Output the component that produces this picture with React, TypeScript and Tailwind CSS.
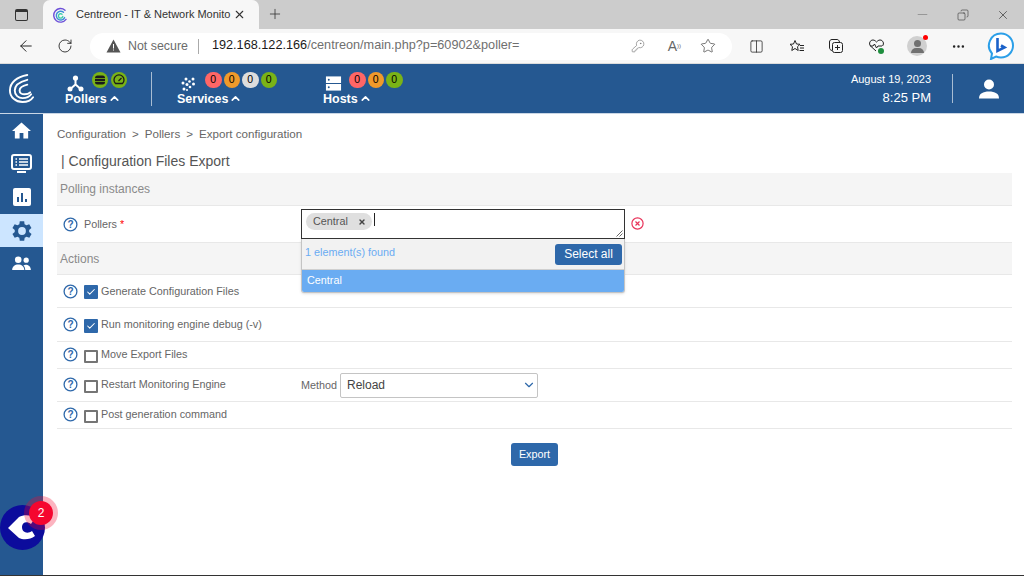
import { ArrowLeft, RotateCw, X, Plus, KeyRound, Star, Columns2, Copy, Minus, Ellipsis, ChevronUp, ChevronDown, Check } from 'lucide-react';

const font = 'font-["Liberation_Sans",Arial,sans-serif]';

function Help() {
  return (
    <svg width="15" height="15" viewBox="0 0 15 15" className="shrink-0">
      <circle cx="7.5" cy="7.5" r="6.4" fill="none" stroke="#2e68aa" strokeWidth="1.3" />
      <text x="7.5" y="11" textAnchor="middle" fontSize="10" fontWeight="700" fill="#2e68aa" fontFamily="Liberation Sans">?</text>
    </svg>
  );
}

function Box({ checked }: { checked?: boolean }) {
  return checked ? (
    <span className="flex h-[14px] w-[14px] shrink-0 items-center justify-center rounded-[1px] bg-[#2e68aa]">
      <Check size={10} strokeWidth={2.5} className="text-white" />
    </span>
  ) : (
    <span className="block h-[13px] w-[14px] shrink-0 rounded-[1px] border-2 border-[#757575]" />
  );
}

function Badge({ color, text }: { color: string; text: string }) {
  return (
    <span className={`flex h-[16.5px] w-[16.5px] items-center justify-center rounded-full text-[10.5px] text-black ${color}`}>{text}</span>
  );
}

function Section({ title, h }: { title: string; h: string }) {
  return (
    <div className={`flex items-center border-b border-[#e8e8e8] bg-[#f5f5f5] pl-[3px] text-[12px] text-[#8a8a8a] ${h}`}>{title}</div>
  );
}

function Row({ label, checked, h, children }: { label: string; checked?: boolean; h: string; children?: React.ReactNode }) {
  return (
    <div className={`flex items-center border-b border-[#e8e8e8] pl-[6px] ${h}`}>
      <span className={checked ? 'block' : 'block -translate-y-px'}><Help /></span>
      <span className="ml-[6px] mt-[2px] block"><Box checked={checked} /></span>
      <span className={`ml-[3px] w-[200px] text-[10.8px] text-[#666] ${checked ? '' : '-translate-y-px'}`}>{label}</span>
      {children}
    </div>
  );
}

function BrowserBar() {
  return (
    <div className="shrink-0">
      <div className="flex h-[29px] items-end bg-[#cccccc]">
        <div className="flex h-[29px] w-[43px] items-center justify-center">
          <div className="h-[12px] w-[13px] rounded-[2px] border-[1.5px] border-t-[3px] border-[#333]" />
        </div>
        <div className="flex h-[29px] w-[216px] items-center rounded-t-[7px] bg-[#f7f7f7] pl-[9px] pr-[13px]">
          <svg width="16" height="16" viewBox="0 0 16 16" fill="none" strokeWidth="1.4" strokeLinecap="round">
            <path d="M13 3.2A6.8 6.8 0 1 0 14 12.4" stroke="#6c4fd8" />
            <path d="M11.5 5.2A4.4 4.4 0 1 0 12.6 10.6" stroke="#3f8fd8" />
            <path d="M10 7.2A2.2 2.2 0 1 0 10.8 9.4" stroke="#3fcfa8" />
          </svg>
          <span className="ml-[8px] whitespace-nowrap text-[11px] text-[#333]">Centreon - IT &amp; Network Monito</span>
          <X size={13} className="ml-auto text-[#333]" />
        </div>
        <Plus size={16} strokeWidth={1.2} className="mb-[7px] ml-[8px] text-[#333]" />
        <div className="ml-auto flex h-[29px] items-center gap-[27px] pr-[14px] text-[#333]">
          <Minus size={15} strokeWidth={1} className="text-[#777]" />
          <Copy size={12} strokeWidth={1.2} className="scale-x-[-1]" />
          <X size={14} strokeWidth={1.2} />
        </div>
      </div>
      <div className="flex h-[35px] items-center border-b border-[#dcdcdc] bg-[#f7f7f7] pl-[17px]">
        <ArrowLeft size={18} strokeWidth={1.3} className="text-[#222]" />
        <RotateCw size={16} strokeWidth={1.3} className="ml-[22px] text-[#222]" />
        <div className="ml-[17px] flex h-[27px] w-[642px] items-center rounded-full bg-white pl-[16px]">
          <svg width="15" height="14" viewBox="0 0 15 14"><path d="M7.5 0.5 14.5 13.5H0.5Z" fill="#555" /><path d="M7 5h1v4.5H7zM7 10.5h1v1H7z" fill="#fff" /></svg>
          <span className="ml-[7px] text-[12.4px] text-[#6b6b6b]">Not secure</span>
          <span className="ml-[10px] h-[15px] w-px bg-[#aaa]" />
          <span className="ml-[13px] text-[12.7px] text-[#1a1a1a]">192.168.122.166<span className="text-[#6f6f6f]">/centreon/main.php?p=60902&amp;poller=</span></span>
          <KeyRound size={14} strokeWidth={1} className="ml-auto text-[#666]" />
          <span className="ml-[23px] text-[14px] leading-none text-[#666]">A<sup className="text-[6px]">))</sup></span>
          <Star size={16} strokeWidth={1} className="ml-[19px] mr-[16px] text-[#333]" />
        </div>
        <Columns2 size={15} strokeWidth={1.2} className="ml-[17px] text-[#222]" />
        <svg width="16" height="15" viewBox="0 0 16 15" fill="none" stroke="#222" className="ml-[25px]">
          <path d="M6 1.5 7.5 5 11 5.3 8.5 7.7 9.2 11.5 6 9.5 2.8 11.5 3.5 7.7 1 5.3 4.5 5Z" />
          <path d="M11 6.5h4M11 9h4M10.5 11.5h4.5" />
        </svg>
        <svg width="16" height="16" viewBox="0 0 16 16" fill="none" stroke="#222" className="ml-[23px]">
          <rect x="4.5" y="4.5" width="10" height="10" rx="2" />
          <path d="M4 12.5C2 12 1.5 11 1.5 9V4C1.5 2.5 2.5 1.5 4 1.5h5c1.2 0 2 .7 2.5 2.5M9.500 7v5M7 9.500h5" />
        </svg>
        <svg width="17" height="17" viewBox="0 0 17 17" fill="none" stroke="#222" className="ml-[24px]">
          <path d="M8 13 2.500 8C.5 5.500 2 2 5 2c1.500 0 2.500 1 3.500 2 1-1 2-2 3.500-2 3 0 4.500 3.500 2.500 6" />
          <path d="M2 8h3l1.500-2 2 4L10 8h4" />
          <circle cx="13" cy="13" r="3" fill="#1e8e3e" stroke="none" />
        </svg>
        <div className="relative ml-[22px] flex h-[20px] w-[20px] flex-col items-center overflow-visible rounded-full bg-[#d0d0d0]">
          <div className="mt-[4px] h-[7px] w-[7px] rounded-full bg-[#707070]" />
          <div className="mt-[1px] h-[5px] w-[13px] rounded-t-full bg-[#707070]" />
          <div className="absolute right-[-1px] top-[-1px] h-[5px] w-[5px] rounded-full bg-[#f00]" />
        </div>
        <Ellipsis size={15} className="ml-[24px] text-[#222]" />
        <svg width="28" height="28" viewBox="0 0 28 28" className="ml-[21px]">
          <path d="M14 1.500a12 12 0 0 1 0 24c-2 0-3.500-.4-5-1l-5 2.500 1-5.500A12 12 0 0 1 14 1.500Z" fill="#fff" stroke="#2b9fe8" strokeWidth="2" />
          <path d="M10.500 6v13l7-3.500-3.500-2" fill="none" stroke="#1b62c9" strokeWidth="2.600" />
        </svg>
      </div>
    </div>
  );
}

function AppHeader() {
  return (
    <div className="flex h-[50px] shrink-0 items-center border-b border-[#c9d6e5] bg-[#255891] text-white">
      <div className="flex w-[43px] justify-center">
        <svg width="27" height="31" viewBox="0 0 28 32" fill="none" stroke="#fff" strokeWidth="2" strokeLinecap="round">
          <path d="M20 2C9 4 2 10 2 18c0 7 6 12 13 12 5 0 9-2 11-5" />
          <path d="M20 7C12 9 7 13 7 18c0 5 4 8 8 8 4 0 7-1 9-4" />
          <path d="M20 12c-4 1-8 3-8 6 0 3 3 4 5 4 3 0 5-1 6-2" />
        </svg>
      </div>
      <div className="ml-[22px] flex w-[86px] flex-col">
        <div className="flex items-start pl-[2px]">
          <svg width="17" height="17" viewBox="0 0 16 17" fill="#fff" className="mt-[3px]">
            <circle cx="8" cy="3" r="2.6" />
            <circle cx="2.500" cy="14" r="2.500" />
            <circle cx="13.500" cy="14" r="2.500" />
            <path d="M7 3h2v6l4.500 4-1.300 1.500L8 10.800 3.800 14.500 2.500 13 7 9Z" />
          </svg>
          <svg width="16" height="16" viewBox="0 0 16 16" className="ml-[8px]">
            <circle cx="8" cy="8" r="8" fill="#7ab317" />
            <rect x="3" y="3.500" width="10" height="9" rx="2.500" fill="#1a1a1a" />
            <path d="M3 6.500h10M3 9.500h10" stroke="#7ab317" strokeWidth="0.8" />
          </svg>
          <svg width="16" height="16" viewBox="0 0 16 16" fill="none" className="ml-[3px]">
            <circle cx="8" cy="8" r="8" fill="#7ab317" />
            <path d="M4.500 11.500a5 5 0 1 1 7 0Z" stroke="#1a1a1a" strokeWidth="1.300" />
            <path d="M7.500 9 10.500 6" stroke="#1a1a1a" strokeWidth="1.300" />
          </svg>
        </div>
        <div className="flex items-center text-[12.5px] font-bold leading-[14px]">Pollers<ChevronUp size={13} strokeWidth={3} className="ml-[1px]" /></div>
      </div>
      <div className="h-[34px] w-px bg-[#a9bdd3]" />
      <div className="ml-[25px] flex w-[146px] flex-col">
        <div className="flex items-start pl-[4px]">
          <svg width="15" height="15" viewBox="0 0 15 15" fill="#fff" className="mt-[5px]">
            <circle cx="5" cy="2" r="1.500" /><circle cx="12" cy="2" r="1.500" /><circle cx="8.500" cy="4.500" r="1.300" />
            <circle cx="2" cy="6" r="1.500" /><circle cx="6" cy="7.500" r="1.500" /><circle cx="12.500" cy="7" r="1.500" />
            <circle cx="9" cy="10" r="1.300" /><circle cx="3" cy="12" r="1.500" /><circle cx="6" cy="13" r="1" />
          </svg>
          <div className="ml-[9px] flex gap-[2px]">
            <Badge color="bg-[#ff6666]" text="0" /><Badge color="bg-[#f09a2b]" text="0" /><Badge color="bg-[#dddddd]" text="0" /><Badge color="bg-[#7ab317]" text="0" />
          </div>
        </div>
        <div className="flex items-center text-[12.5px] font-bold leading-[14px]">Services<ChevronUp size={13} strokeWidth={3} className="ml-[1px]" /></div>
      </div>
      <div className="flex flex-col">
        <div className="flex items-start pl-[2px]">
          <svg width="17" height="17" viewBox="0 0 18 17" fill="#fff" className="mt-[3px]">
            <path d="M1 1h16v7H1Z" /><path d="M1 9h16v7H1Z" />
            <circle cx="4" cy="4.500" r="1" fill="#255891" /><circle cx="4" cy="12.500" r="1" fill="#255891" />
          </svg>
          <div className="ml-[7px] flex gap-[2px]">
            <Badge color="bg-[#ff6666]" text="0" /><Badge color="bg-[#f09a2b]" text="0" /><Badge color="bg-[#7ab317]" text="0" />
          </div>
        </div>
        <div className="flex items-center text-[12.5px] font-bold leading-[14px]">Hosts<ChevronUp size={13} strokeWidth={3} className="ml-[1px]" /></div>
      </div>
      <div className="ml-auto flex flex-col items-end">
        <span className="text-[11px] leading-[15px]">August 19, 2023</span>
        <span className="mt-[3px] text-[13px] leading-[15px]">8:25 PM</span>
      </div>
      <div className="ml-[21px] h-[29px] w-px bg-[#a9bdd3]" />
      <svg width="20" height="20" viewBox="0 0 20 20" fill="#fff" className="ml-[26px] mr-[25px]">
        <circle cx="10" cy="5.500" r="5" />
        <path d="M0 19.500c0-5 4-7 10-7s10 2 10 7Z" />
      </svg>
    </div>
  );
}

function Sidebar() {
  return (
    <div className="relative z-20 flex w-[43px] shrink-0 flex-col items-center bg-[#255891]">
      <div className="flex h-[33px] items-center justify-center">
        <svg width="19" height="17" viewBox="0 0 20 17" fill="#fff"><path d="M10 0 20 9h-3v8h-5v-6H8v6H3V9H0Z" /></svg>
      </div>
      <div className="flex h-[33px] items-center justify-center">
        <svg width="21" height="19" viewBox="0 0 21 19" fill="none" stroke="#fff" strokeWidth="2">
          <rect x="1" y="1" width="19" height="14" rx="2" />
          <path d="M4.500 5h1.500M8 5h9M4.500 8h1.500M8 8h9M4.500 11h1.500M8 11h9" strokeWidth="1.500" />
          <path d="M6 18h9" />
        </svg>
      </div>
      <div className="flex h-[34px] items-center justify-center">
        <svg width="18" height="18" viewBox="0 0 18 18"><rect width="18" height="18" rx="2" fill="#fff" /><path d="M4 9h2v5H4zM8 5h2v9H8zM12 11h2v3h-2z" fill="#255891" /></svg>
      </div>
      <div className="flex h-[33px] w-full items-center justify-center bg-[#cce5ff]">
        <svg width="20" height="20" viewBox="4 3 18 18" fill="#255891">
          <path d="M19.400 13a7.500 7.500 0 0 0 0-2l2.100-1.600-2-3.500-2.500 1a7.500 7.500 0 0 0-1.700-1L15 3.200h-4l-.4 2.700a7.500 7.500 0 0 0-1.700 1l-2.500-1-2 3.500L6.500 11a7.500 7.500 0 0 0 0 2l-2.100 1.600 2 3.500 2.500-1a7.500 7.500 0 0 0 1.700 1l.4 2.700h4l.4-2.700a7.500 7.500 0 0 0 1.700-1l2.500 1 2-3.500ZM13 15.500a3.500 3.500 0 1 1 0-7 3.500 3.500 0 0 1 0 7Z" />
        </svg>
      </div>
      <div className="flex h-[33px] items-center justify-center">
        <svg width="19" height="15" viewBox="0 0 20 16" fill="#fff">
          <circle cx="6.500" cy="4" r="3.500" /><circle cx="15" cy="4.500" r="2.800" />
          <path d="M0 15c0-4 3-6 6.500-6S13 11 13 15Z" /><path d="M14 15c0-2-.7-4-2-5 3-1.500 8 0 8 5Z" />
        </svg>
      </div>
      {/* floating chat bubble */}
      <div className="absolute left-0 top-[391px] h-[45px] w-[45px] rounded-full bg-[#0c0c9c]">
        <svg width="28" height="25" viewBox="0 0 28 25" className="ml-[8px] mt-[10px]">
          <path d="M0 13 11 2C16-1 24 0 27 3L23 9C19 6 14 7 14 12 14 18 20 19 24 16L27 21C22 25 15 25 11 23Z" fill="#fff" />
        </svg>
        <span className="absolute left-[29px] top-[-4px] flex h-[24px] w-[24px] items-center justify-center rounded-full bg-[#f5062f] text-[12px] text-white shadow-[0_0_0_5px_rgba(245,6,47,0.3)]">2</span>
      </div>
    </div>
  );
}

export default function App() {
  return (
    <div className={`flex h-[576px] w-[1024px] flex-col overflow-hidden border-b border-[#333] bg-white ${font}`}>
      <BrowserBar />
      <AppHeader />
      <div className="flex min-h-0 flex-1">
        <Sidebar />
        <div className="flex-1 pl-[14px] pr-[12px]">
          <div className="flex h-[38px] items-center gap-[6px] pt-[1px] text-[11.6px] text-[#666]">
            <span>Configuration</span><span>&gt;</span><span>Pollers</span><span>&gt;</span><span>Export configuration</span>
          </div>
          <div className="flex h-[21px] items-center pb-[2px] pl-[4px] text-[14px] text-[#555]">| Configuration Files Export</div>
          <Section title="Polling instances" h="h-[33px]" />
          <div className="relative flex h-[37px] items-center border-b border-[#e8e8e8] pl-[6px]">
            <Help />
            <span className="ml-[6px] text-[10.8px] text-[#666]">Pollers <span className="text-[#f00]">*</span></span>
            {/* open multi select */}
            <div className="absolute left-[244px] top-[3px] z-10 w-[324px]">
              <div className="relative flex h-[30px] items-start border border-[#333] bg-white pl-[4px] pt-[3px]">
                <span className="flex h-[17px] w-[66px] items-center rounded-full bg-[#dfdfdf] pl-[7px] text-[10.8px] text-[#555]">
                  Central<X size={8} strokeWidth={4} className="ml-[10px] text-[#444]" />
                </span>
                <span className="ml-[2px] h-[13px] w-px bg-[#222]" />
                <svg width="7" height="7" viewBox="0 0 7 7" stroke="#666" className="absolute bottom-[1px] right-[1px]">
                  <path d="M0.500 6.500 6.500 0.500M3.500 6.500 6.500 3.500" />
                </svg>
              </div>
              <div className="overflow-hidden rounded-b-[3px] border border-t-0 border-[#c4c4c4] shadow-sm">
                <div className="flex h-[30px] items-center justify-between bg-[#f2f2f2] pl-[3px] pr-[2px] text-[10.8px] text-[#6aacf2]">
                  <span className="pb-[3px]">1 element(s) found</span>
                  <span className="flex h-[21px] w-[67px] items-center justify-center rounded-[3px] bg-[#2e68aa] text-[12px] text-white">Select all</span>
                </div>
                <div className="flex h-[23px] items-center border-t border-[#d0d0d0] bg-[#6aacf2] pb-[1px] pl-[5px] text-[10.8px] text-white">Central</div>
              </div>
            </div>
            <svg width="13" height="13" viewBox="0 0 13 13" fill="none" stroke="#e8345a" strokeWidth="1.200" className="absolute left-[574px] top-[11px]">
              <circle cx="6.500" cy="6.500" r="5.600" /><path d="M4.500 4.500l4 4M8.500 4.500l-4 4" />
            </svg>
          </div>
          <Section title="Actions" h="h-[32px]" />
          <Row label="Generate Configuration Files" checked h="h-[33px]" />
          <Row label="Run monitoring engine debug (-v)" checked h="h-[34px]" />
          <Row label="Move Export Files" h="h-[27px]" />
          <Row label="Restart Monitoring Engine" h="h-[33px]">
            <span className="text-[10.8px] text-[#666]">Method</span>
            <div className="ml-[3px] flex h-[25px] w-[198px] items-center justify-between rounded-[2px] border border-[#c4c4c4] pl-[6px] pr-[1px] text-[12px] text-[#444]">
              Reload<ChevronDown size={14} strokeWidth={2} className="text-[#2e68aa]" />
            </div>
          </Row>
          <Row label="Post generation command" h="h-[27px]" />
          <div className="mt-[14px] flex justify-center">
            <span className="flex h-[23px] w-[47px] items-center justify-center rounded-[3px] bg-[#2e68aa] text-[10.8px] text-white">Export</span>
          </div>
        </div>
      </div>
    </div>
  );
}
